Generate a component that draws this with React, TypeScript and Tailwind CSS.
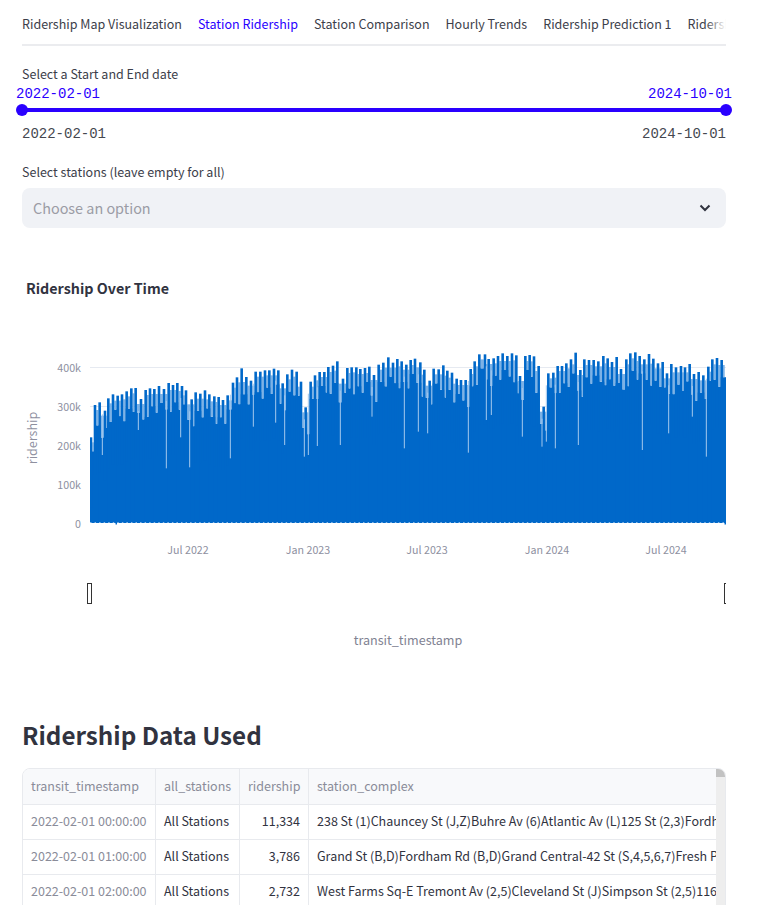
import React from "react";

const segs: [number, number[][]][] = [
  [85, [[18,262],[30,165],[44,157],[60,182],[70,145],[84,133],[98,137],[111,133],[125,124],[139,115],[152,114],[168,147],[182,120],[195,115],[208,117],[222,108],[237,117],[251,99],[264,105],[277,99],[291,108],[303,121],[320,148],[332,127],[346,131],[360,121],[373,133],[388,139],[401,141],[414,150],[428,136],[444,98],[456,82],[470,55]]],
  [245, [[4,81],[18,92],[32,65],[46,65],[60,61],[73,61],[87,56],[100,61],[113,100],[127,73],[141,59],[155,65],[168,95],[182,172],[197,95],[210,76],[224,66],[238,66],[250,51],[264,47],[277,34],[294,86],[307,54],[320,52],[334,52],[346,57],[360,54],[373,50],[387,75],[401,44],[415,38],[430,22],[444,38],[457,27],[470,34]]],
  [405, [[4,44],[17,30],[30,26],[46,37],[58,59],[74,92],[86,56],[101,58],[115,46],[127,62],[141,68],[155,86],[168,90],[182,90],[197,57],[209,34],[223,13],[240,13],[251,27],[266,25],[279,18],[293,10],[307,18],[321,10],[334,16],[345,78],[361,18],[374,15],[387,19],[401,48],[416,170],[430,70],[445,68],[458,48],[471,48]]],
  [565, [[4,40],[18,28],[32,8],[46,60],[58,28],[72,30],[86,30],[100,34],[115,18],[128,25],[141,36],[155,21],[168,57],[184,28],[196,10],[211,7],[224,18],[238,28],[252,12],[265,26],[279,40],[293,36],[306,70],[319,42],[333,52],[348,48],[360,52],[374,42],[387,72],[401,66],[415,76],[430,50],[442,28],[456,24],[470,30]]],
];
const peaks = segs.flatMap(([ox, list]) => list.map(([zx, zy]) => ({ x: ox + zx / 3, y: 350 + zy / 3 })));

const spikeSegs: [number, number[][]][] = [
  [85, [[52,315],[160,240],[244,355],[287,262],[314,352],[436,325]]],
  [245, [[25,230],[92,218],[119,285],[178,320],[190,315],[217,288],[286,285],[381,200],[478,295]]],
  [405, [[40,245],[68,250],[190,308],[244,210],[259,195],[352,260],[411,290],[424,275],[451,295]]],
  [565, [[40,285],[232,300],[311,250],[382,200],[424,320]]],
];
const spikes = spikeSegs.flatMap(([ox, list]) => list.map(([zx, zy]) => ({ x: ox + zx / 3, y: 350 + zy / 3 })));
const nearestTop = (x: number) =>
  peaks.reduce((best, p) => (Math.abs(p.x - x) < Math.abs(best.x - x) ? p : best), peaks[0]).y;

const yTicks: [string, number][] = [["400k", 367.5], ["300k", 406.5], ["200k", 446], ["100k", 485], ["0", 524]];
const xTicks: [string, number][] = [["Jul 2022", 188], ["Jan 2023", 308], ["Jul 2023", 427], ["Jan 2024", 547], ["Jul 2024", 666]];

const depthOf = (i: number) => 9 + ((i * 7) % 5) * 3.2;

function Chart() {
  const fam = "'Noto Sans CJK SC', sans-serif";
  return (
    <svg width={704} height={320} viewBox="22 340 704 320" className="block">
      {yTicks.slice(0, 4).map(([l, y]) => (
        <line key={l} x1={90} x2={726} y1={y} y2={y} stroke="#e6eaf1" strokeWidth={1} />
      ))}
      <rect x={90} y={460} width={636} height={63} fill="#0068c9" />
      {peaks.map((p, i) => {
        const next = peaks[i + 1] ?? { x: 726, y: p.y };
        const low = Math.max(p.y, next.y);
        const x0 = Math.max(90, p.x - 1);
        const top = low + 5 + depthOf(i);
        return <rect key={i} x={x0} y={top} width={next.x + 1 - x0} height={Math.max(0, 523 - top)} fill="#0068c9" />;
      })}
      {peaks.map((p, i) => {
        const next = peaks[i + 1] ?? { x: 726, y: p.y };
        const first = i === 0;
        const x0 = first ? 90 : p.x - 1.3;
        const w = first ? p.x + 1.3 - 90 : 2.6;
        const gapX = p.x + 1.3;
        const gapW = Math.max(0, next.x - 1.3 - gapX);
        const low = Math.max(p.y, next.y);
        return (
          <g key={i}>
            <rect x={gapX} y={low + 5} width={gapW} height={depthOf(i)} fill="#7db2e6" />
            <rect x={x0} y={p.y} width={w} height={Math.min(70, 523 - p.y)} fill="#0068c9" />
          </g>
        );
      })}
      <rect x={720.5} y={403} width={5.5} height={120} fill="#0068c9" />
      {spikes.map((s, i) => {
        const top = nearestTop(s.x) + 12;
        return s.y > top ? <rect key={i} x={s.x - 0.5} y={top} width={1} height={s.y - top} fill="#a3c8ee" /> : null;
      })}
      <line x1={90} x2={726} y1={522.6} y2={522.6} stroke="#ffffff" strokeOpacity={0.6} strokeWidth={1} strokeDasharray="1.5 3.05" />
      <rect x={115.5} y={523} width={1.5} height={1.5} fill="#0068c9" />
      <rect x={724.5} y={523} width={1.5} height={1.5} fill="#0068c9" />

      {yTicks.map(([l, y]) => (
        <text key={l} x={81} y={y + 4} textAnchor="end" fontSize={10.7} fill="#8e909f" fontFamily={fam}>{l}</text>
      ))}
      {xTicks.map(([l, x]) => (
        <text key={l} x={x} y={554} textAnchor="middle" fontSize={10.7} fill="#8e909f" fontFamily={fam}>{l}</text>
      ))}
      <text transform="translate(37 438) rotate(-90)" textAnchor="middle" fontSize={12.5} fill="#8e909f" fontFamily={fam}>ridership</text>
      <text x={408} y={645} textAnchor="middle" fontSize={12.6} fill="#7f8292" fontFamily={fam}>transit_timestamp</text>

      <rect x={87.5} y={583.5} width={4} height={20} fill="#ffffff" stroke="#333333" strokeWidth={1} />
      <rect x={724.5} y={583.5} width={4} height={20} fill="#ffffff" stroke="#333333" strokeWidth={1} />
    </svg>
  );
}

const tabs = ["Ridership Map Visualization", "Station Ridership", "Station Comparison", "Hourly Trends", "Ridership Prediction 1", "Ridership Prediction 2"];

const rows = [
  ["2022-02-01 00:00:00", "All Stations", "11,334", "238 St (1)Chauncey St (J,Z)Buhre Av (6)Atlantic Av (L)125 St (2,3)Fordham Rd (4)"],
  ["2022-02-01 01:00:00", "All Stations", "3,786", "Grand St (B,D)Fordham Rd (B,D)Grand Central-42 St (S,4,5,6,7)Fresh Pond Rd (M)"],
  ["2022-02-01 02:00:00", "All Stations", "2,732", "West Farms Sq-E Tremont Av (2,5)Cleveland St (J)Simpson St (2,5)116 St (6)"],
];

function DataTable() {
  const cols = "grid grid-cols-[133px_84px_69px_408px]";
  const cell = "overflow-hidden whitespace-nowrap px-2 pb-[2px] border-r border-[#e8eaee] last:border-r-0 flex items-center";
  return (
    <div className="flex rounded-lg overflow-hidden border border-[#e8eaee] h-[160px]">
      <div className="w-[694px] overflow-hidden">
        <div className={`${cols} h-[36px] bg-[#f8f9fb] text-[#8a8c99] border-b border-[#e8eaee]`}>
          {["transit_timestamp", "all_stations", "ridership", "station_complex"].map((h) => (
            <div key={h} className={cell}>{h}</div>
          ))}
        </div>
        {rows.map((r) => (
          <div key={r[0]} className={`${cols} h-[35px] border-b border-[#e8eaee]`}>
            <div className={`${cell} text-[#8a8c99]`}>{r[0]}</div>
            <div className={`${cell} text-[#31333f]`}>{r[1]}</div>
            <div className={`${cell} justify-end text-[#31333f]`}>{r[2]}</div>
            <div className={`${cell} text-[#31333f]`}>{r[3]}</div>
          </div>
        ))}
      </div>
      <div className="w-[9px] bg-[#eeeeee]">
        <div className="h-[8px] bg-[#c2c2c2]" />
      </div>
    </div>
  );
}

export default function App() {
  return (
    <div className="w-[760px] h-[905px] overflow-hidden bg-white text-[12.5px] leading-[20px] text-[#3c3e4a] font-['Noto_Sans_CJK_SC',sans-serif]">
      <div className="pl-[22px] w-[726px]">
        <div className="relative pt-[14px] overflow-hidden border-b-2 border-[#ebecef] h-[46px]">
          <div className="flex gap-4 whitespace-nowrap">
            {tabs.map((t, i) => (
              <div key={t} className={i === 1 ? "text-[#2a00ff] h-[32px] border-b-2 border-[#2a00ff]" : "text-[#3c3e4a] h-[32px]"}>
                {t}
              </div>
            ))}
          </div>
          <div className="absolute right-0 top-0 h-[44px] w-[20px] bg-gradient-to-r from-transparent to-white" />
        </div>

        <div className="mt-[18px]">Select a Start and End date</div>
        <div className="-mx-[6px] flex justify-between font-['Liberation_Mono',monospace] text-[14px] text-[#2a00ff]">
          <span>2022-02-01</span>
          <span>2024-10-01</span>
        </div>
        <div className="relative h-[12px] flex items-center">
          <div className="h-[4px] w-full bg-[#2a00ff]" />
          <div className="absolute -left-[6px] top-0 w-[12px] h-[12px] rounded-full bg-[#2a00ff]" />
          <div className="absolute -right-[6px] top-0 w-[12px] h-[12px] rounded-full bg-[#2a00ff]" />
        </div>
        <div className="mt-[8px] flex justify-between font-['Liberation_Mono',monospace] text-[14px] text-[#45474f]">
          <span>2022-02-01</span>
          <span>2024-10-01</span>
        </div>

        <div className="mt-[18px]">Select stations (leave empty for all)</div>
        <div className="mt-[6px] h-[40px] rounded-lg bg-[#f0f2f6] flex items-center justify-between pl-[11px] pr-[15px]">
          <span className="text-[14.4px] text-[#9b9ca5]">Choose an option</span>
          <svg width="12" height="8" viewBox="0 0 12 8" fill="none">
            <path d="M1.5 1.5 L6 6 L10.5 1.5" stroke="#31333f" strokeWidth="2" />
          </svg>
        </div>

        <div className="mt-[50px] pl-[4px] font-semibold text-[14.3px] text-[#31333f]">Ridership Over Time</div>
        <div className="mt-[42px]"><Chart /></div>

        <div className="mt-[55px] text-[24.2px] leading-[40px] font-semibold text-[#31333f]">Ridership Data Used</div>
        <div className="mt-[13px]"><DataTable /></div>
      </div>
    </div>
  );
}
